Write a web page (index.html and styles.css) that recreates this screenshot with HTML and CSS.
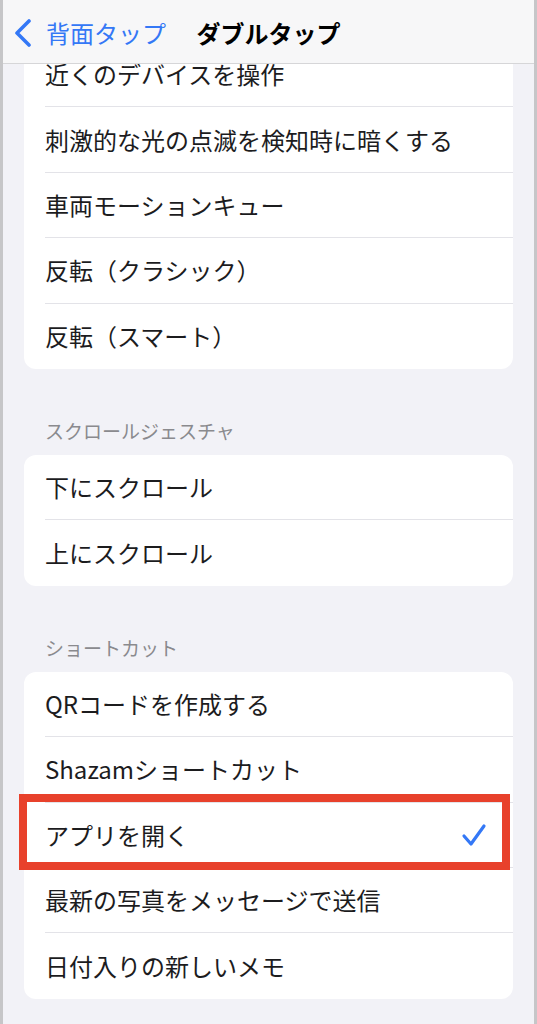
FILE: index.html
```html
<!DOCTYPE html>
<html lang="ja">
<head>
  <meta charset="UTF-8">
  <meta name="viewport" content="width=device-width, initial-scale=1.0">
  <title>ダブルタップ</title>
  <link rel="stylesheet" href="styles.css">
</head>
<body>
  <div class="screen">
    <div class="navbar">
      <div class="back">
        <svg class="chevron" width="20" height="28" viewBox="0 0 20 28">
          <path d="M16 2 L4 14 L16 26" fill="none" stroke="#3478f6" stroke-width="3.6" stroke-linecap="round" stroke-linejoin="round"/>
        </svg>
        <span>背面タップ</span>
      </div>
      <div class="title">ダブルタップ</div>
    </div>

    <div class="content">
      <div class="card first">
        <div class="row">近くのデバイスを操作</div>
        <div class="row">刺激的な光の点滅を検知時に暗くする</div>
        <div class="row">車両モーションキュー</div>
        <div class="row">反転（クラシック）</div>
        <div class="row">反転（スマート）</div>
      </div>

      <div class="section-header">スクロールジェスチャ</div>
      <div class="card">
        <div class="row">下にスクロール</div>
        <div class="row">上にスクロール</div>
      </div>

      <div class="section-header">ショートカット</div>
      <div class="card">
        <div class="row">QRコードを作成する</div>
        <div class="row">Shazamショートカット</div>
        <div class="row selected">
          <span>アプリを開く</span>
          <svg class="check" width="26" height="24" viewBox="0 0 26 24">
            <path d="M3 13 L10 21 L23 3" fill="none" stroke="#3478f6" stroke-width="3.2" stroke-linecap="round" stroke-linejoin="round"/>
          </svg>
        </div>
        <div class="row">最新の写真をメッセージで送信</div>
        <div class="row">日付入りの新しいメモ</div>
      </div>
    </div>

    <div class="highlight"></div>
  </div>
</body>
</html>
```

FILE: styles.css
```css
body {
  margin: 0;
  background-color: #f2f2f7;
  font-family: "Noto Sans CJK JP", "Noto Sans", sans-serif;
  color: #1c1c1e;
}

.screen {
  position: relative;
  height: 1024px;
  overflow: hidden;
  border-left: 3px solid #c6c6c8;
  border-right: 3px solid #c6c6c8;
  background-color: #f2f2f7;
}

.navbar {
  position: absolute;
  top: 0;
  left: 0;
  right: 0;
  height: 64px;
  background-color: #f7f7f8;
  border-bottom: 1px solid #d6d6d8;
  box-sizing: border-box;
  display: flex;
  align-items: center;
  justify-content: center;
  z-index: 2;
}

.back {
  position: absolute;
  left: 10px;
  top: 19px;
  display: flex;
  align-items: center;
  gap: 13px;
  color: #3478f6;
  font-size: 24px;
  line-height: 28px;
}

.title {
  font-size: 24px;
  font-weight: bold;
  line-height: 28px;
  margin-top: 2px;
  color: #000;
}

.content {
  padding: 42px 21px 0;
}

.card {
  background-color: #fff;
  border-radius: 12px;
  overflow: hidden;
}

.row {
  height: 65.4px;
  box-sizing: border-box;
  margin-left: 21px;
  padding-right: 26px;
  border-bottom: 1px solid #e3e3e8;
  display: flex;
  align-items: center;
  justify-content: space-between;
  font-size: 24px;
  line-height: 30px;
}

.row:last-child {
  border-bottom: none;
}

.section-header {
  margin: 50px 21px 12px;
  font-size: 19px;
  line-height: 24px;
  color: #8a8a8e;
}

.check {
  margin-right: 0;
}

.highlight {
  position: absolute;
  left: 16px;
  top: 794px;
  width: 491px;
  height: 76px;
  box-sizing: border-box;
  border: 8px solid #e8412b;
  z-index: 3;
}
```
